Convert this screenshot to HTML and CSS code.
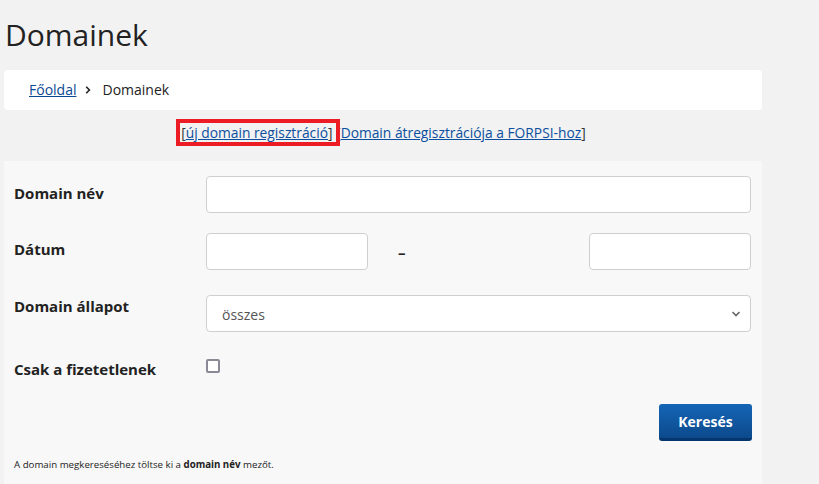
FILE: index.html
```html
<!DOCTYPE html>
<html lang="hu">
<head>
<meta charset="utf-8">
<title>Domainek</title>
<link rel="stylesheet" href="styles.css">
</head>
<body>
<div class="page">
  <h1 class="title">Domainek</h1>
  <nav class="crumbs">
    <a class="crumb-link" href="#">Főoldal</a>
    <svg class="crumb-sep" width="8" height="10" viewBox="0 0 8 10"><path d="M2.2 1.8 L5.4 5 L2.2 8.2" fill="none" stroke="#222" stroke-width="1.6"/></svg>
    <span class="crumb-current">Domainek</span>
  </nav>
  <div class="actions">
    <span class="highlight">[<a href="#">új domain regisztráció</a>] </span><span class="action">[<a href="#">Domain átregisztrációja a FORPSI-hoz</a>]</span>
  </div>
  <form class="panel">
    <div class="row row-name">
      <label class="label">Domain név</label>
      <div class="field"><input class="input" type="text"></div>
    </div>
    <div class="row row-date">
      <label class="label label-date">Dátum</label>
      <div class="field date-field">
        <input class="input date-input" type="text">
        <span class="dash">–</span>
        <input class="input date-input" type="text">
      </div>
    </div>
    <div class="row row-state">
      <label class="label label-flush">Domain állapot</label>
      <div class="field">
        <div class="select">
          <span class="select-text">összes</span>
          <svg class="select-chev" width="10" height="6" viewBox="0 0 10 6"><path d="M1.5 1 L5 4.5 L8.5 1" fill="none" stroke="#666" stroke-width="1.6"/></svg>
        </div>
      </div>
    </div>
    <div class="row row-check">
      <label class="label label-flush">Csak a fizetetlenek</label>
      <div class="field"><span class="checkbox"></span></div>
    </div>
    <div class="buttons">
      <button class="btn" type="button">Keresés</button>
    </div>
    <p class="note">A domain megkereséséhez töltse ki a <b>domain név</b> mezőt.</p>
  </form>
</div>
</body>
</html>
```
FILE: styles.css
```css
html, body {
  margin: 0;
  padding: 0;
  background: #f2f2f2;
  font-family: "Open Sans", "Liberation Sans", sans-serif;
  color: #222;
}
.page {
  width: 758px;
  padding-left: 4px;
  height: 484px;
  overflow: hidden;
}
.title {
  margin: 17px 0 0 1px;
  font-size: 30px;
  line-height: 36px;
  font-weight: 400;
  color: #222;
}
.crumbs {
  margin-top: 17px;
  background: #fff;
  border-radius: 4px;
  height: 40px;
  padding-left: 25px;
  display: flex;
  align-items: center;
  font-size: 14px;
  line-height: 20px;
}
.crumb-link {
  color: #0b4a92;
  text-decoration: underline;
}
.crumb-sep {
  margin: 0 10px 0 8px;
}
.crumb-current {
  color: #222;
}
.actions {
  margin-top: 13px;
  text-align: center;
  font-size: 13.8px;
  line-height: 20px;
  color: #333;
}
.actions a {
  color: #0b4f9e;
  text-decoration: underline;
}
.highlight {
  outline: 4px solid #ed1c24;
  outline-offset: 0;
  padding: 0 0 0 1px;
}
.panel {
  margin-top: 18px;
  background: #f8f8f8;
  padding: 15px 11px 0 10px;
  height: 340px;
}
.row {
  display: flex;
  align-items: flex-start;
}
.row-name { margin-bottom: 20px; }
.row-date { margin-bottom: 25px; }
.row-state { margin-bottom: 26px; }
.row-check { margin-bottom: 25px; }
.label {
  width: 192px;
  flex: none;
  font-size: 15px;
  font-weight: 700;
  line-height: 20px;
  padding-top: 7px;
  color: #222;
}
.label-date { padding-top: 6px; }
.label-flush { padding-top: 1px; }
.field {
  flex: 1;
}
.input {
  display: block;
  box-sizing: border-box;
  width: 100%;
  height: 37px;
  border: 1px solid #cfcfcf;
  border-radius: 4px;
  background: #fff;
  margin: 0;
  font: inherit;
}
.date-field {
  display: flex;
  align-items: center;
}
.date-input {
  width: 162px;
  flex: none;
}
.dash {
  flex: 1;
  padding-left: 30px;
  font-size: 15px;
  font-weight: 700;
  color: #222;
}
.select {
  box-sizing: border-box;
  height: 37px;
  border: 1px solid #cfcfcf;
  border-radius: 4px;
  background: #fff;
  display: flex;
  align-items: center;
  justify-content: space-between;
  padding: 0 9px 0 15px;
}
.select-text {
  font-size: 14px;
  color: #555;
  padding-top: 2px;
}
.checkbox {
  display: block;
  box-sizing: border-box;
  width: 14px;
  height: 14px;
  margin-top: 1px;
  border: 2px solid #8a8a96;
  border-radius: 2px;
  background: #fff;
}
.buttons {
  display: flex;
  justify-content: flex-end;
  margin-right: -1px;
}
.btn {
  width: 93px;
  height: 37px;
  border: none;
  border-bottom: 3px solid #06366f;
  border-radius: 3px;
  background: linear-gradient(#1565b6, #0c4a8c);
  color: #fff;
  font-family: "Open Sans", "Liberation Sans", sans-serif;
  font-size: 14px;
  font-weight: 700;
  padding: 0;
}
.note {
  margin: 16px 0 0 0;
  font-size: 9.7px;
  line-height: 16px;
  color: #222;
}
.note b { font-weight: 700; }
```
